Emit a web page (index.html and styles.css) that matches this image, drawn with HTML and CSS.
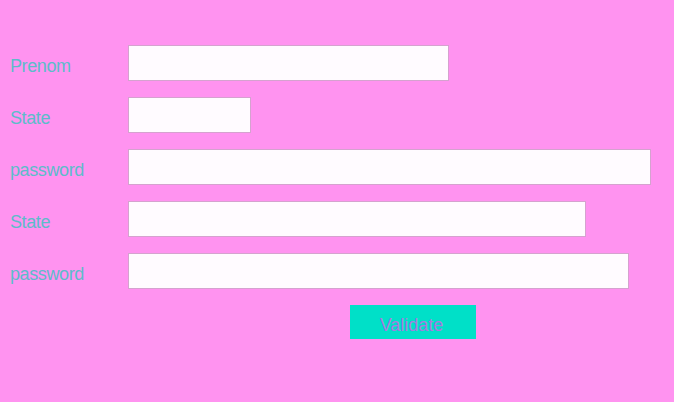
FILE: index.html
```html
<!DOCTYPE html>
<html>
<head>
<meta charset="utf-8">
<link rel="stylesheet" href="styles.css">
</head>
<body>
<form class="form">
  <label class="label">Prenom</label>
  <div class="field"><input class="input w1" type="text"></div>
  <label class="label">State</label>
  <div class="field"><input class="input w2" type="text"></div>
  <label class="label">password</label>
  <div class="field"><input class="input w3" type="password"></div>
  <label class="label">State</label>
  <div class="field"><input class="input w4" type="text"></div>
  <label class="label">password</label>
  <div class="field"><input class="input w5" type="password"></div>
  <div class="spacer"></div>
  <div class="field actions"><button class="btn" type="button">Validate</button></div>
</form>
</body>
</html>
```
FILE: styles.css
```css
html, body {
  margin: 0;
  padding: 0;
  background: #ff93f0;
  height: 100%;
}
body {
  font-family: "Liberation Sans", Arial, sans-serif;
  overflow: hidden;
}
.form {
  display: grid;
  grid-template-columns: 118px 1fr;
  row-gap: 16px;
  padding: 45px 0 0 10px;
  align-items: start;
}
.label {
  display: block;
  color: #5cbcca;
  font-size: 18px;
  height: 36px;
  line-height: 42px;
  letter-spacing: -0.4px;
}
.field {
  display: flex;
  height: 36px;
}
.input {
  box-sizing: border-box;
  height: 36px;
  margin: 0;
  border: 1px solid #d5a2cf;
  background: #fffbff;
  outline: none;
  padding: 0 6px;
}
.w1 { width: 321px; }
.w2 { width: 123px; }
.w3 { width: 523px; }
.w4 { width: 458px; }
.w5 { width: 501px; }
.actions {
  height: 34px;
}
.btn {
  margin-left: 222px;
  width: 126px;
  height: 34px;
  border: none;
  background: #00e0c8;
  color: #a77be0;
  font-family: "Liberation Sans", Arial, sans-serif;
  font-size: 18px;
  padding: 6px 3px 0 0;
}
```
